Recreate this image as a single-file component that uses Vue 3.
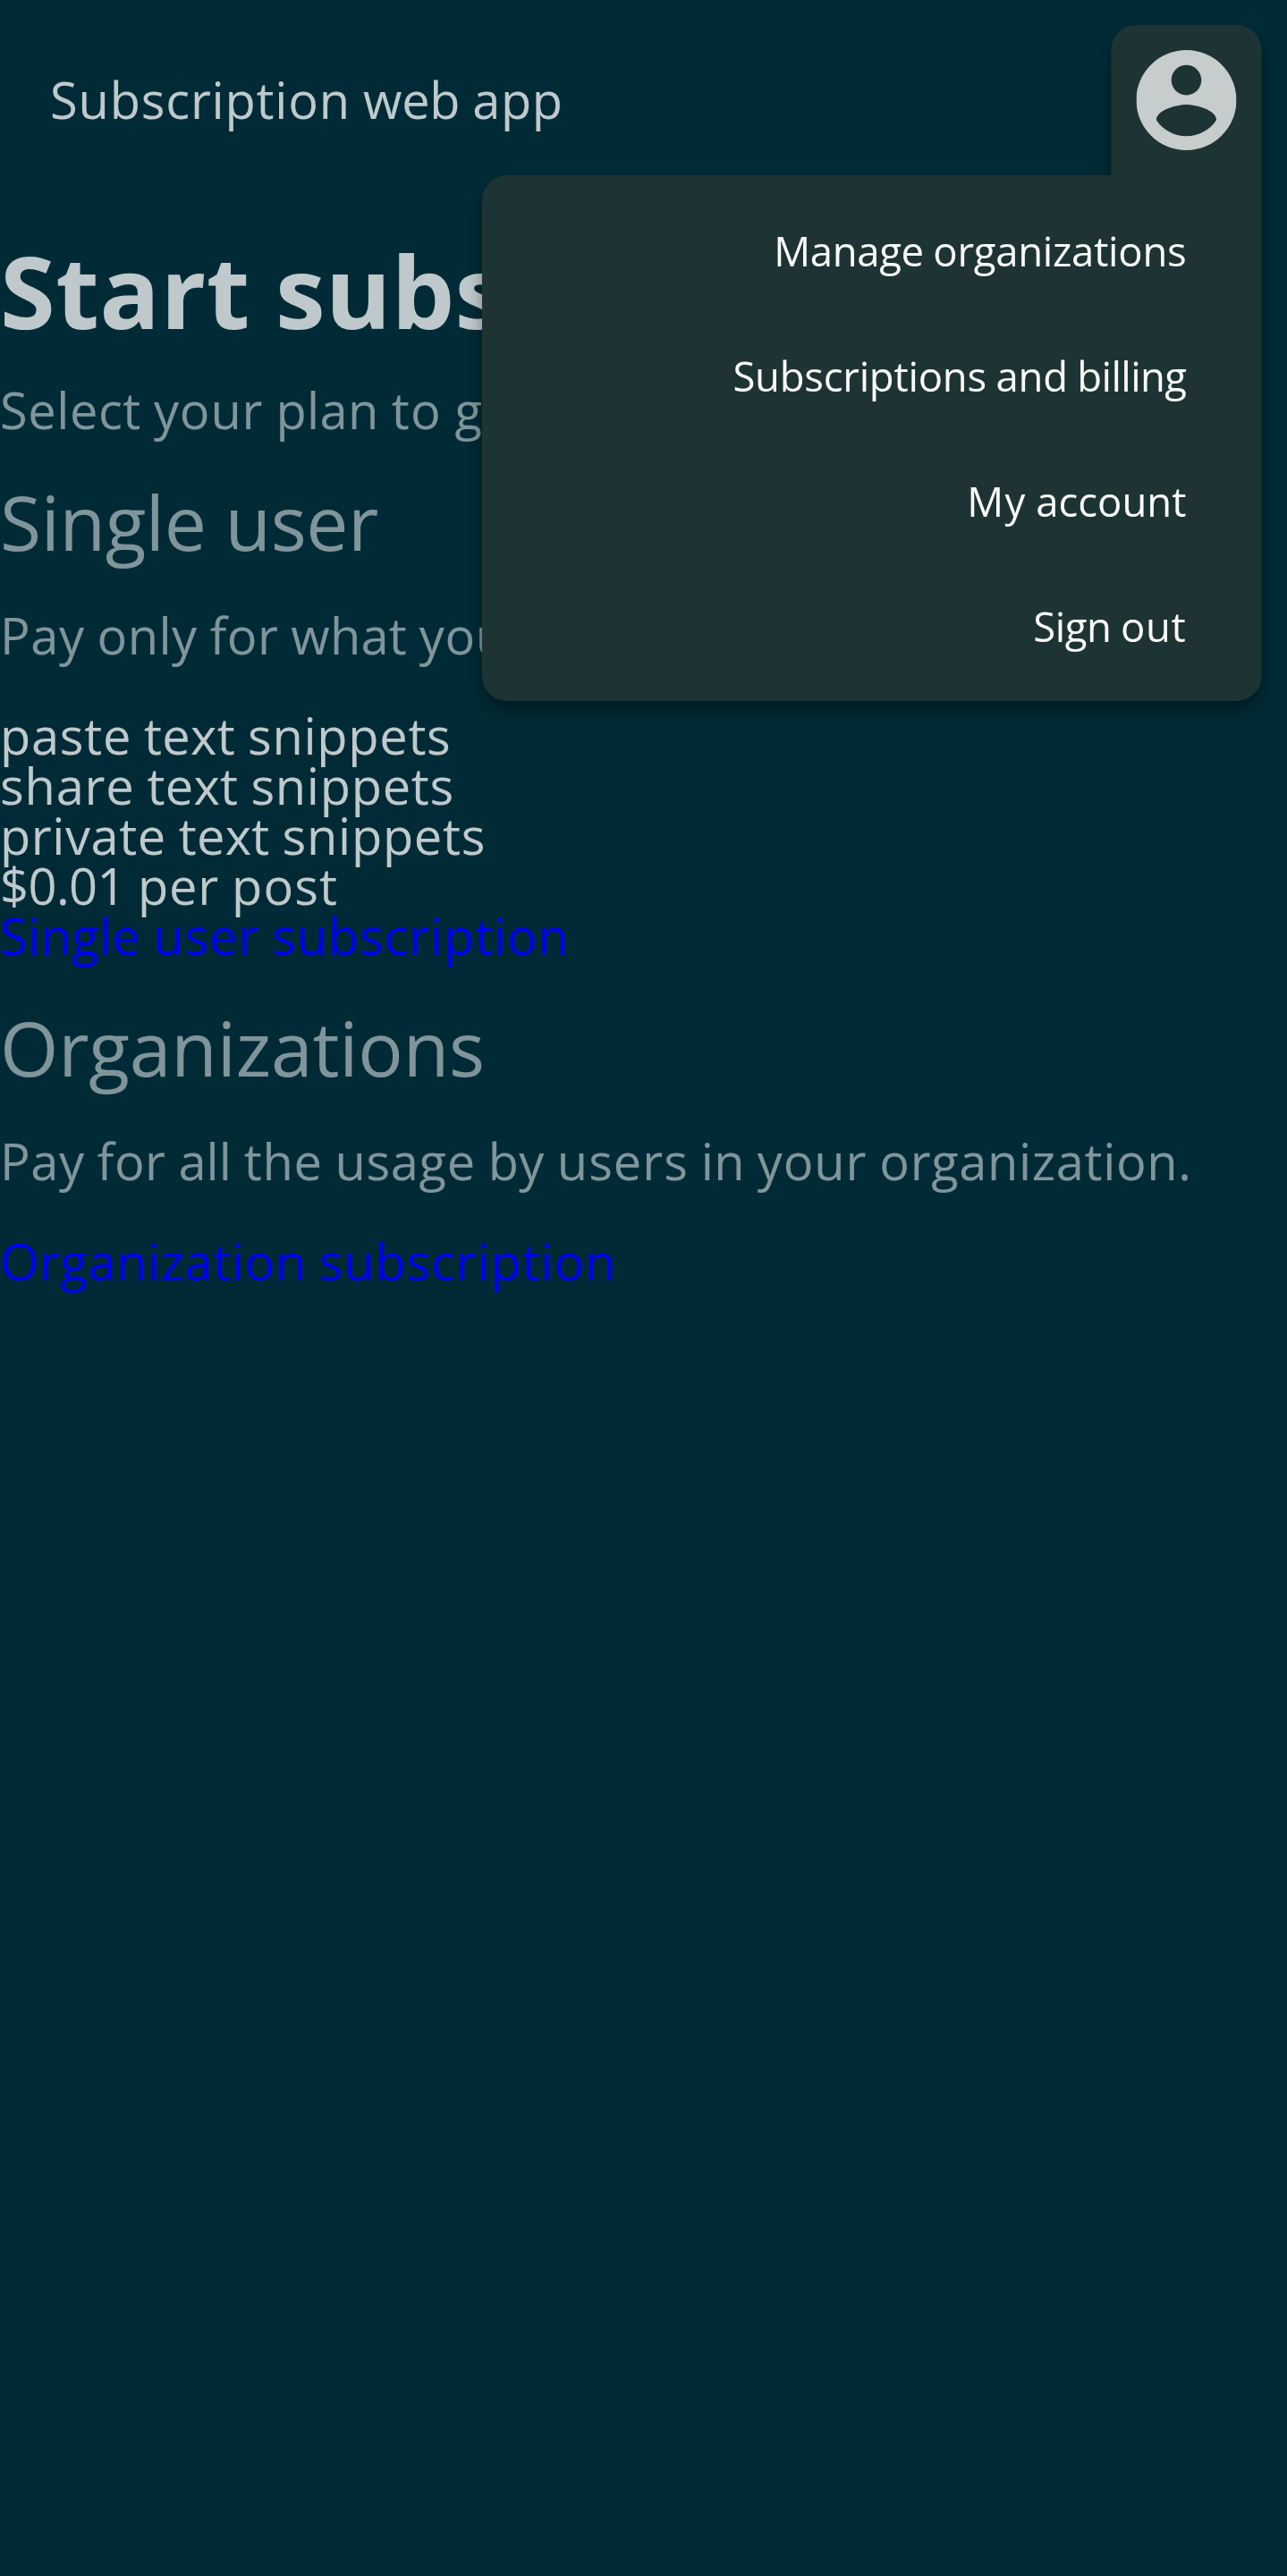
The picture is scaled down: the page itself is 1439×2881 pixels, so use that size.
<script setup>
import { h } from 'vue'

const features = [
  'paste text snippets',
  'share text snippets',
  'private text snippets',
  '$0.01 per post',
]
const menuItems = ['Manage organizations', 'Subscriptions and billing', 'My account', 'Sign out']

// Open Sans advance widths, in 1/2048 em
const regular = {
  ' ': 532, a: 1139, b: 1255, c: 975, d: 1255, e: 1149, f: 694, g: 1122, h: 1257, i: 518,
  l: 518, m: 1905, n: 1257, o: 1237, p: 1255, r: 836, s: 977, t: 723, u: 1257, v: 1020,
  w: 1593, x: 1073, y: 1022, z: 958, M: 1849, O: 1595, P: 1233, S: 1124,
  $: 1169, 0: 1169, 1: 1169, '.': 545,
}
const bold = {
  ' ': 532, S: 1128, a: 1237, b: 1296, c: 1053, i: 625, n: 1346, o: 1268, p: 1296,
  r: 930, s: 1018, t: 889, u: 1346,
}
// Hinted widths that differ from plain rounding
const hinted = { '16z': 8, '24t': 9, '13y': 7, '32r': 15 }

// Text whose words and spaces take up whole layout pixels
function GridText({ text, size = 16, heavy = false }) {
  const table = heavy ? bold : regular
  const delta = (ch) => {
    const natural = (table[ch] * size) / 2048
    return (hinted[size + ch] ?? Math.round(natural)) - natural
  }
  const children = []
  text.split(' ').forEach((word, i) => {
    if (i) children.push(' ')
    const total = [...word].reduce((sum, ch) => sum + delta(ch), 0)
    children.push(h('span', { style: { letterSpacing: `${(total / word.length).toFixed(4)}px` } }, word))
  })
  return h('span', { style: { wordSpacing: `${delta(' ').toFixed(4)}px` } }, children)
}
GridText.props = { text: String, size: Number, heavy: Boolean }
</script>

<template>
  <div class="viewport">
    <div class="page">
      <header class="bar">
        <GridText text="Subscription web app" />
        <div class="account">
          <button class="trigger" aria-label="Account">
            <svg viewBox="2 2 20 20" class="avatar">
              <path
                d="M12 2C6.48 2 2 6.48 2 12s4.48 10 10 10 10-4.48 10-10S17.52 2 12 2zm0 3c1.66 0 3 1.34 3 3s-1.34 3-3 3-3-1.34-3-3 1.34-3 3-3zm0 14.2c-2.5 0-4.71-1.28-6-3.22.03-1.99 4-3.08 6-3.08 1.99 0 5.97 1.09 6 3.08-1.29 1.94-3.5 3.22-6 3.22z"
              />
            </svg>
          </button>
          <nav class="menu">
            <a v-for="item in menuItems" :key="item" class="menu-item">
              <GridText :text="item" :size="13" />
            </a>
          </nav>
        </div>
      </header>
      <main>
        <h1><GridText text="Start subscription" :size="32" heavy /></h1>
        <p><GridText text="Select your plan to" /> get started.</p>
        <h2><GridText text="Single user" :size="24" /></h2>
        <p><GridText text="Pay only for what you" /> use.</p>
        <ul>
          <li v-for="feature in features" :key="feature"><GridText :text="feature" /></li>
        </ul>
        <a class="link"><GridText text="Single user subscription" /></a>
        <h2><GridText text="Organizations" :size="24" /></h2>
        <p><GridText text="Pay for all the usage by users in your organization." /></p>
        <a class="link"><GridText text="Organization subscription" /></a>
      </main>
    </div>
  </div>
</template>

<style>
body {
  margin: 0;
  background: #002b36;
}
</style>

<style scoped>
.viewport {
  height: 2881px;
  overflow: hidden;
  background: #002b36;
}
/* Phone-sized layout, enlarged to a 3.5x display */
.page {
  width: 411px;
  transform: scale(3.5);
  transform-origin: 0 0;
  color: rgba(255, 255, 255, 0.75);
  font-family: 'Open Sans', sans-serif;
  font-size: 16px;
  font-kerning: none;
  line-height: 1;
  white-space: nowrap;
}
.bar {
  display: flex;
  align-items: center;
  justify-content: space-between;
  box-sizing: border-box;
  height: 64px;
  padding: 8px 8px 8px 16px;
}
.account {
  position: relative;
  z-index: 1;
  filter: drop-shadow(0 3px 2.5px rgba(0, 0, 0, 0.36));
}
.trigger {
  display: flex;
  align-items: center;
  justify-content: center;
  width: 48px;
  height: 48px;
  padding: 0;
  border: 0;
  border-radius: 8px 8px 0 0;
  background: #1e3434;
}
.avatar {
  width: 32px;
  height: 32px;
  fill: #c7cccc;
}
.menu {
  position: absolute;
  top: 100%;
  right: 0;
  box-sizing: border-box;
  width: 249px;
  padding: 4px 0;
  border-radius: 8px 0 8px 8px;
  background: #1e3434;
}
.menu-item {
  display: block;
  padding-right: 24px;
  color: #fafafa;
  font-size: 13px;
  line-height: 40px;
  text-align: right;
}
main {
  padding-top: 13px;
}
h1 {
  margin: 0 0 14px;
  font-size: 32px;
  font-weight: 700;
}
h2 {
  margin: 16px 0;
  color: rgba(255, 255, 255, 0.5);
  font-size: 24px;
  font-weight: 400;
}
p {
  margin: 0 0 16px;
  color: rgba(255, 255, 255, 0.5);
}
ul {
  margin: 0;
  padding: 0;
  list-style: none;
}
.link {
  display: block;
  color: #0000ee;
}
</style>
